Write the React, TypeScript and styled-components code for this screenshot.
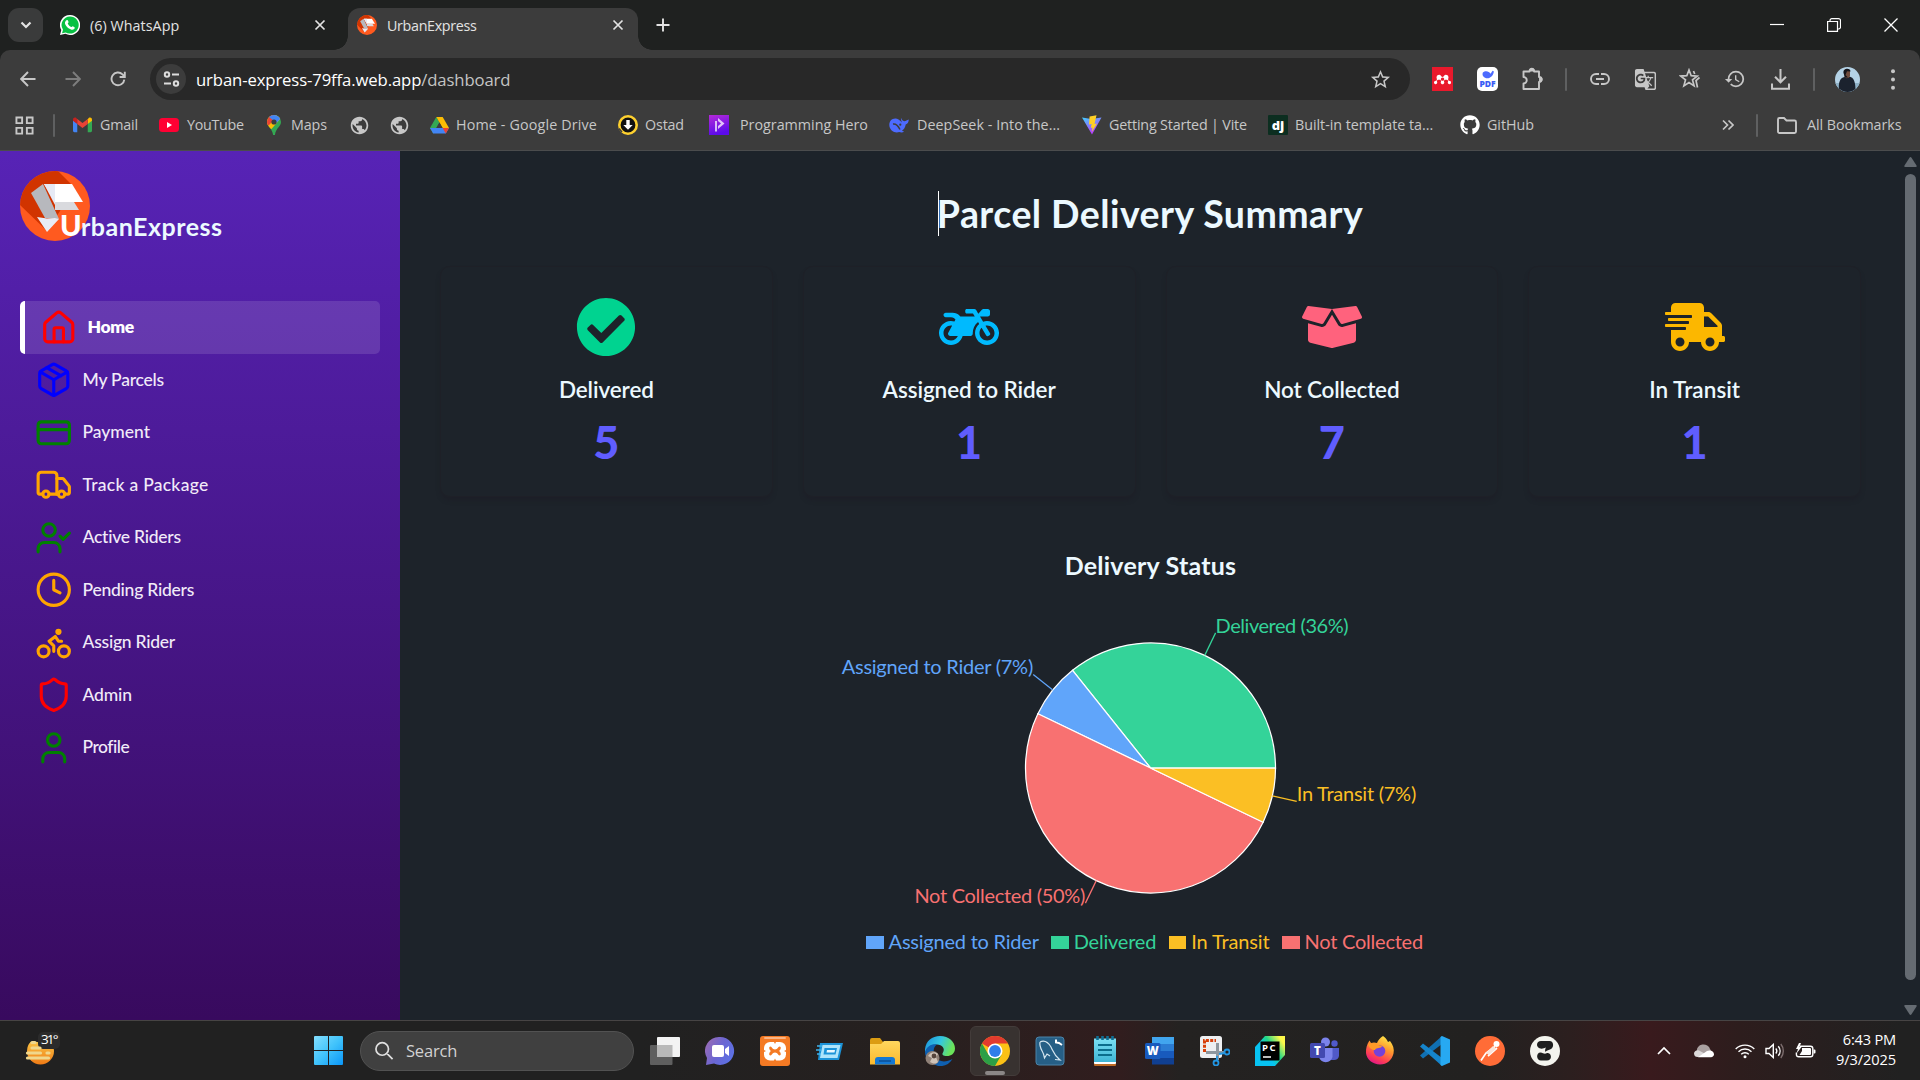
import React from "react";
import styled, { createGlobalStyle, css } from "styled-components";
import { House, Package, CreditCard, Truck, UserCheck, Clock, Bike, Shield, User } from "lucide-react";
import { FaCheckCircle, FaMotorcycle, FaBoxOpen, FaShippingFast, FaGithub } from "react-icons/fa";
import { MdGTranslate, MdHistory, MdStarBorder, MdPublic } from "react-icons/md";
import { SiMendeley } from "react-icons/si";

const UI = `"Open Sans", "Noto Sans", sans-serif`;
const BRAND = `Lato, "Open Sans", sans-serif`;

const Global = createGlobalStyle`
  * { box-sizing: border-box; }
  html, body { margin: 0; background: #1d232a; overflow: hidden; }
  svg { display: block; flex: none; }
`;

const Screen = styled.div`
  width: 1920px;
  height: 1080px;
  display: flex;
  flex-direction: column;
  overflow: hidden;
  font-family: ${UI};
`;

const Label = styled.span<{ $track?: number }>`
  white-space: nowrap;
  letter-spacing: ${(p) => p.$track ?? 0}px;
`;

/* ---------- browser window ---------- */

const TabStrip = styled.div`
  height: 50px;
  flex: none;
  display: flex;
  align-items: flex-end;
  background: #1f2120;
  color: #e3e3e3;
`;

const TabSearch = styled.div`
  width: 35px;
  height: 34px;
  margin: 0 0 8px 8px;
  border-radius: 11px;
  background: #3a3b3b;
  display: flex;
  align-items: center;
  justify-content: center;
`;

const Tab = styled.div<{ $active?: boolean }>`
  position: relative;
  width: ${(p) => (p.$active ? 290 : 305)}px;
  height: 42px;
  padding: 0 ${(p) => (p.$active ? 14 : 22)}px 8px ${(p) => (p.$active ? 9 : 17)}px;
  display: flex;
  align-items: center;
  gap: 10px;
  font-size: 14.3px;
  ${(p) =>
    p.$active &&
    css`
      background: #3c3c3c;
      border-radius: 12px 12px 0 0;
      &::before,
      &::after {
        content: "";
        position: absolute;
        bottom: 0;
        width: 14px;
        height: 14px;
      }
      &::before {
        left: -14px;
        background: radial-gradient(circle at 0 0, transparent 13.5px, #3c3c3c 14px);
      }
      &::after {
        right: -14px;
        background: radial-gradient(circle at 100% 0, transparent 13.5px, #3c3c3c 14px);
      }
    `}
`;

const Grow = styled.div`
  flex: 1;
`;

const NewTab = styled.div`
  width: 50px;
  height: 50px;
  display: flex;
  align-items: center;
  justify-content: center;
`;

const WindowControls = styled.div`
  height: 49px;
  margin-bottom: 1px;
  padding-right: 1px;
  display: grid;
  grid-template-columns: repeat(3, 57px);
  align-items: center;
  justify-items: center;
`;

const Toolbar = styled.div`
  height: 58px;
  flex: none;
  display: flex;
  align-items: center;
  padding-left: 5px;
  background: #3c3c3c;
  color: #c7c7c7;
  border-radius: 10px 10px 0 0;
`;

const ToolbarBack = styled.div`
  background: #1f2120;
`;

const Slot = styled.div<{ $narrow?: boolean }>`
  width: ${(p) => (p.$narrow ? 22.5 : 45)}px;
  flex: none;
  display: flex;
  justify-content: center;
`;

const Divider = styled.div`
  width: 2px;
  height: 23px;
  border-radius: 1px;
  background: #5f6061;
`;

const AddressBar = styled.div`
  width: 1260px;
  height: 42px;
  margin: 0 10px;
  padding: 0 18px 0 6px;
  border-radius: 21px;
  background: #282828;
  display: flex;
  align-items: center;
  gap: 10px;
  font-size: 16.7px;
  color: #fff;
`;

const SiteInfo = styled.div`
  width: 30px;
  height: 30px;
  border-radius: 50%;
  background: #3c3c3c;
  display: flex;
  align-items: center;
  justify-content: center;
`;

const Path = styled.span`
  color: #c4c4c4;
`;

const ExtTile = styled.div<{ $bg: string; $color: string; $r?: number }>`
  width: 21px;
  height: 24px;
  border-radius: ${(p) => p.$r ?? 0}px;
  background: ${(p) => p.$bg};
  color: ${(p) => p.$color};
  display: flex;
  flex-direction: column;
  align-items: center;
  justify-content: center;
  font: 800 8.5px/9px ${UI};
`;

const Bookmarks = styled.div`
  height: 43px;
  flex: none;
  display: flex;
  align-items: center;
  padding: 0 18px 8px 15px;
  background: #3c3c3c;
  border-bottom: 1px solid #4b4c4d;
  color: #c7c7c7;
  font-size: 14.3px;
`;

const Bookmark = styled.div<{ $w: number; $gap?: number }>`
  width: ${(p) => p.$w}px;
  display: flex;
  align-items: center;
  gap: ${(p) => p.$gap ?? 8}px;
  ${Label} {
    padding-bottom: 2px;
  }
`;

/* ---------- dashboard page ---------- */

const Page = styled.div`
  height: 869px;
  flex: none;
  display: flex;
  background: #1d232a;
  font-family: ${BRAND};
  color: #ecf9ff;
`;

const Sidebar = styled.aside`
  width: 400px;
  flex: none;
  padding: 20px;
  background: linear-gradient(to bottom, #5723b6, #380a5e);
`;

const Logo = styled.div`
  height: 70px;
  display: flex;
  align-items: flex-end;
`;

const LogoText = styled.div`
  margin: 0 0 -3px -30px;
  font-weight: 700;
  font-size: 25px;
  line-height: 36px;
  letter-spacing: 0.5px;
`;

const LogoInitial = styled.span`
  font-size: 29px;
  color: #fff;
  font-weight: 900;
  letter-spacing: -0.6px;
`;

const Nav = styled.nav`
  margin-top: 60px;
  display: flex;
  flex-direction: column;
`;

const NavItem = styled.div<{ $active?: boolean; $color: string }>`
  height: 52.5px;
  padding-left: 15px;
  display: flex;
  align-items: center;
  gap: 10px;
  font-size: 17.5px;
  font-weight: 500;
  color: #f1ebf8;
  svg {
    color: ${(p) => p.$color};
  }
  ${Label} {
    padding-bottom: 1px;
  }
  ${(p) =>
    p.$active &&
    css`
      border-left: 5px solid #fff;
      border-radius: 5px;
      background: rgba(255, 255, 255, 0.12);
      color: #fff;
      font-weight: 800;
    `}
`;

const Main = styled.main`
  flex: 1;
  padding: 40px;
  display: flex;
  flex-direction: column;
  align-items: center;
`;

const Heading = styled.h1`
  margin: 0 0 30px;
  border-left: 1px solid #fff;
  text-indent: -2px;
  font-size: 37.5px;
  line-height: 45px;
  font-weight: 700;
  letter-spacing: 0.42px;
`;

const Cards = styled.div`
  width: 100%;
  display: grid;
  grid-template-columns: repeat(4, 1fr);
  gap: 30px;
`;

const Card = styled.section<{ $icon: string }>`
  height: 231px;
  padding-top: 30px;
  border: 1px solid #1e2027;
  border-radius: 10px;
  box-shadow: 0 4px 5px -1px rgba(30, 24, 34, 0.35);
  display: flex;
  flex-direction: column;
  align-items: center;
  svg {
    color: ${(p) => p.$icon};
    width: 60px;
    height: 60px;
  }
`;

const CardTitle = styled.h2<{ $track: number }>`
  margin: 15px 0 10px;
  font-size: 22.5px;
  line-height: 35px;
  font-weight: 600;
  letter-spacing: ${(p) => p.$track}px;
`;

const CardValue = styled.p`
  margin: 0;
  font-size: 45px;
  line-height: 50px;
  font-weight: 900;
  color: #605dff;
`;

const ChartTitle = styled.h3`
  margin: 51px 0 17px;
  font-size: 25px;
  line-height: 35px;
  font-weight: 700;
  letter-spacing: 0.22px;
`;

const Chart = styled.svg`
  overflow: visible;
  font: 400 20px ${BRAND};
`;

const Legend = styled.div`
  height: 30px;
  margin-top: 6px;
  padding-right: 12px;
  display: flex;
  align-items: center;
  gap: 12.5px;
`;

const LegendItem = styled.div<{ $color: string; $track: number }>`
  display: flex;
  align-items: center;
  gap: 5px;
  font-size: 20px;
  line-height: 30px;
  color: ${(p) => p.$color};
  letter-spacing: ${(p) => p.$track}px;
  white-space: nowrap;
  &::before {
    content: "";
    width: 17.5px;
    height: 13.5px;
    margin-top: 3px;
    background: ${(p) => p.$color};
  }
`;

const Scrollbar = styled.div`
  width: 19px;
  flex: none;
  padding: 6px 4px 5px 4px;
  display: flex;
  flex-direction: column;
  align-items: center;
  color: #656b72;
`;

const Thumb = styled.div`
  width: 11px;
  height: 806px;
  margin: 7px 0 25px;
  border-radius: 6px;
  background: #656b72;
`;

/* ---------- taskbar ---------- */

const Taskbar = styled.footer`
  height: 60px;
  flex: none;
  display: flex;
  align-items: center;
  border-top: 1px solid #474444;
  background: linear-gradient(
    90deg,
    #212121 0,
    #212121 640px,
    #26201f 900px,
    #311d1e 1120px,
    #242221 1180px,
    #222120 1480px,
    #2c1f1f 1570px,
    #391a1d 1650px,
    #2d1d1d 1740px,
    #212121 1900px
  );
  color: #fff;
`;

const Weather = styled.div`
  width: 314px;
  padding-left: 25px;
`;

const SearchBox = styled.div`
  width: 274px;
  height: 40px;
  margin: 0 3px 0 17px;
  padding-left: 14px;
  border-radius: 20px;
  border: 1px solid #525252;
  background: #404040;
  display: flex;
  align-items: center;
  gap: 12px;
  font-size: 16.5px;
  letter-spacing: -0.2px;
  color: #d2d2d2;
`;

const AppButton = styled.div<{ $active?: boolean }>`
  position: relative;
  width: 50px;
  height: 50px;
  margin: 0 2.5px;
  border-radius: 6px;
  display: flex;
  align-items: center;
  justify-content: center;
  ${(p) =>
    p.$active &&
    css`
      background: #383230;
      border: 1px solid #433c3a;
      &::after {
        content: "";
        position: absolute;
        bottom: 0;
        left: 14px;
        width: 20px;
        height: 4px;
        border-radius: 2px;
        background: #8b8786;
      }
    `}
`;

const Tray = styled.div`
  display: flex;
  align-items: center;
  gap: 20px;
`;

const TrayGroup = styled.div`
  margin-left: -2px;
  display: flex;
  gap: 10px;
`;

const Clockface = styled.div`
  width: 60px;
  margin-right: 24px;
  padding-bottom: 3px;
  display: flex;
  flex-direction: column;
  align-items: flex-end;
  font-size: 14.6px;
  line-height: 20px;
`;

/* ---------- drawings ---------- */

type StrokeProps = { size?: number; d: string; w?: number; color?: string; box?: string };
const Stroke = ({ size = 20, d, w = 2, color = "currentColor", box = "0 0 20 20" }: StrokeProps) => (
  <svg width={size} height={size} viewBox={box} fill="none" stroke={color} strokeWidth={w}>
    <path d={d} />
  </svg>
);

const BrandMark = ({ size }: { size: number }) => (
  <svg width={size} height={size} viewBox="0 0 70 70">
    <defs>
      <clipPath id={`mark${size}`}><circle cx="35" cy="35" r="35" /></clipPath>
    </defs>
    <g clipPath={`url(#mark${size})`}>
      <rect width="70" height="70" fill="#ff5a1f" />
      <path d="M0 0H38L52 14 40 40 27 60 0 34Z" fill="#d13400" />
      <path d="M35 31H54L59 39H35Z" fill="#d9dade" />
      <path d="M24 13H52L63 31H35Z" fill="#fff" />
      <path d="M24 13H35V34Z" fill="#e6eaf5" />
      <path d="M11 22 23 13 39 48 25 47Z" fill="#b7b8bd" />
      <path d="M17 46 27 47.5 35 47 39 48 27 61Z" fill="#e8ecf6" />
    </g>
  </svg>
);

const WhatsApp = () => (
  <svg width="20" height="20" viewBox="0 0 20 20">
    <path d="M10 0a10 10 0 1 1-4.600 18.800L0 20l1.300-5A10 10 0 0 1 10 0Z" fill="#fff" />
    <path d="M10 1.400a8.600 8.600 0 1 1-4.300 16L2 18.200l1-3.500A8.600 8.600 0 0 1 10 1.400Z" fill="#08c143" />
    <path d="M6.500 5.300c.7-.6 1.200-.3 1.400.2l.7 1.600c.1.500-.9 1.200-.8 1.600.8 1.600 1.900 2.600 3.500 3.400.4.100 1-1 1.500-.8l1.700.9c.4.300.2 1.300-.4 1.900-1.300 1.300-3.500.6-5.600-.8-1.700-1.200-3.100-3-3.500-4.800-.2-1.300.5-2.500 1.500-3.200Z" fill="#fff" />
  </svg>
);

const Gmail = () => (
  <svg width="19" height="20" viewBox="0 0 20 16">
    <path d="M0 3v11a1.500 1.500 0 0 0 1.400 1.500H4.500V6.500Z" fill="#4285f4" />
    <path d="M20 3v11a1.500 1.500 0 0 1-1.400 1.500H15.500V6.500Z" fill="#34a853" />
    <path d="M15.500 2v5L20 3.500V2.300C20 .3 18-.5 16.500.6Z" fill="#fbbc04" />
    <path d="M4.500 2v5L0 3.500V2.300C0 .3 2-.5 3.500.6Z" fill="#c5221f" />
    <path d="M4.500 1.800 10 6l5.500-4.200V7L10 11.200 4.500 7Z" fill="#ea4335" />
  </svg>
);

const YouTube = () => (
  <svg width="20" height="14" viewBox="0 0 20 14">
    <rect width="20" height="14" rx="3.500" fill="#ff0033" />
    <path d="M8 4v6l5-3Z" fill="#fff" />
  </svg>
);

const MapsPin = () => (
  <svg width="14" height="20" viewBox="0 0 14 20">
    <defs>
      <clipPath id="pin"><path d="M7 0a7 7 0 0 1 7 7c0 4.500-5 6-6 12.400a1 1 0 0 1-2 0C5 13 0 11.500 0 7a7 7 0 0 1 7-7Z" /></clipPath>
    </defs>
    <g clipPath="url(#pin)">
      <rect width="14" height="20" fill="#34a853" />
      <path d="M0 0H14V3L4.500 14 0 13Z" fill="#fbbc04" />
      <path d="M0 0H6L7 5 1.500 10.500 0 11Z" fill="#ea4335" />
      <path d="M3-1H14V3L9.500 8 2 2Z" fill="#4285f4" />
    </g>
    <circle cx="7" cy="7" r="2.600" fill="#3c3c3c" />
  </svg>
);

const Drive = () => (
  <svg width="19" height="17" viewBox="0 0 19 17">
    <path d="M6.300 0 0 11l3.200 5.500L9.500 5.600Z" fill="#34a853" />
    <path d="M6.300 0h6.400L19 11h-6.400Z" fill="#fbbc04" />
    <path d="M0 11H19l-3.200 5.500H3.200Z" fill="#4285f4" />
    <path d="M12.600 11H19l-3.200 5.500Z" fill="#ea4335" />
    <path d="M6.300 11h6.300L9.500 5.600Z" fill="#3c3c3c" />
  </svg>
);

const Ostad = () => (
  <svg width="20" height="20" viewBox="0 0 20 20">
    <circle cx="10" cy="10" r="8.700" fill="#111" stroke="#fdd02f" strokeWidth="2.600" />
    <path d="M1 13.500 4 17" stroke="#3c3c3c" strokeWidth="1.500" />
    <path d="M8.300 5h3.400v5h3L10 14.800 5.300 10h3Z" fill="#fff" />
  </svg>
);

const ProgHero = () => (
  <svg width="20" height="20" viewBox="0 0 20 20">
    <defs><linearGradient id="ph" x2="0.300" y2="1"><stop stopColor="#b52ad8" /><stop offset="1" stopColor="#5b0bea" /></linearGradient></defs>
    <rect width="20" height="20" fill="url(#ph)" />
    <path d="M7 6v10.500" stroke="#fff" strokeWidth="1.400" />
    <path d="M9 3l6.500 5.500L9 14V11l3-2.500L9 6Z" fill="#e2c2fa" />
  </svg>
);

const Whale = () => (
  <svg width="20" height="20" viewBox="0 0 20 20">
    <path d="M12.500 3c.3 1.800 1.200 3 2.700 3.200C17 6 18 5 19.800 4.500c-.2 2.500-1 4.300-3.100 5-.5 3-1.700 4.800-3.700 6.200l2.200 1.100c-1.600.9-3.300.9-5 .3C5.500 18.500.5 15.500.3 10 .2 6 3 3.200 6.500 3.400c2 .1 4 1.500 6.500 4-.8-1.500-1.200-3-.5-4.400Z" fill="#4d6bfe" />
    <path d="M4 9c3-.5 5.500 2.500 7 5.500" stroke="#3c3c3c" strokeWidth="1.500" fill="none" />
    <circle cx="11.300" cy="9.700" r="1.100" fill="#3c3c3c" />
  </svg>
);

const Vite = () => (
  <svg width="20" height="20" viewBox="0 0 20 20">
    <defs><linearGradient id="vt" x2="0.500" y2="1"><stop stopColor="#41d1ff" /><stop offset="1" stopColor="#bd34fe" /></linearGradient></defs>
    <path d="M0 2.500 9.300 4 19.500 2.500 10 19.500Z" fill="url(#vt)" />
    <path d="M14.500.2 7.600 1.500 7 9.500l2.600-.5-.8 4 1.700-.5-.7 4.500L15 8.500l-2.500.4Z" fill="#ffcf26" />
  </svg>
);

const Django = () => (
  <svg width="20" height="20" viewBox="0 0 20 20">
    <rect width="20" height="20" rx="1" fill="#0c2e20" />
    <text x="10" y="14.500" textAnchor="middle" fontFamily={UI} fontSize="13" fontWeight="800" fill="#fff">dj</text>
  </svg>
);

const Puzzle = () => (
  <svg width="21" height="24" viewBox="0 0 21 24" fill="none" stroke="currentColor" strokeWidth="1.900" strokeLinejoin="round">
    <path d="M1.500 4.500H7.500a2.300 2.300 0 0 1 4.600 0H17V10a2.400 2.400 0 0 1 0 5V22H1.500V16.500a3 3 0 0 0 0-6.500Z" />
    <path d="M8 3.500a1.800 1.800 0 0 1 3.600 0ZM18 10.800a1.700 1.700 0 0 1 0 3.400Z" fill="currentColor" />
  </svg>
);

const Avatar = () => (
  <svg width="25" height="25" viewBox="0 0 25 25">
    <defs><clipPath id="av"><circle cx="12.500" cy="12.500" r="12.500" /></clipPath></defs>
    <g clipPath="url(#av)">
      <rect width="25" height="25" fill="#b4d2e6" />
      <rect y="16" width="25" height="9" fill="#8db0c6" />
      <path d="M4 25C3 15 5 11 9.500 10l4.500-.5c5 1 6.500 5 6.500 15.500Z" fill="#1b222e" />
      <path d="M9 3.500C10 1.500 14.500 1.500 15 4v5c-1 2.500-4 3-5.500 1Z" fill="#6f4b3d" />
      <path d="M8.500 6C7.500 1 15.500 0 15.500 4.500L12 4.300 10.500 8 13 10.500h-3Z" fill="#14151b" />
    </g>
  </svg>
);

const Sun = () => (
  <svg width="36" height="36" viewBox="0 0 36 36" overflow="visible">
    <defs><linearGradient id="sun" x2="0" y2="1"><stop stopColor="#fbd04c" /><stop offset="1" stopColor="#f07b16" /></linearGradient></defs>
    <circle cx="15.500" cy="18" r="13.500" fill="url(#sun)" />
    <rect x="13" y="-1" width="22" height="17" rx="5" fill="#2b2b2b" />
    <rect x="0" y="0" width="13" height="9" fill="#212121" />
    <g stroke="#f0d78c" strokeWidth="3.200" strokeLinecap="round">
      <path d="M7 9.500h3M7 15h8M2.500 20h13M22 20h2M2.500 25h21" />
    </g>
    <text x="16" y="11" fontFamily={UI} fontSize="13.500" fill="#fff" textLength="17.500">31°</text>
  </svg>
);

const Windows = () => (
  <svg width="29" height="29" viewBox="0 0 29 29">
    <defs><linearGradient id="win" gradientUnits="userSpaceOnUse" x1="0" y1="0" x2="29" y2="29"><stop stopColor="#84dfff" /><stop offset="0.500" stopColor="#41c3fb" /><stop offset="1" stopColor="#0a96f8" /></linearGradient></defs>
    <path d="M0 1a1 1 0 0 1 1-1H14V14H0ZM15 0H28a1 1 0 0 1 1 1V14H15ZM0 15H14V29H1a1 1 0 0 1-1-1ZM15 15H29V28a1 1 0 0 1-1 1H15Z" fill="url(#win)" />
  </svg>
);

const Icon30 = ({ children }: { children: React.ReactNode }) => (
  <svg width="30" height="30" viewBox="0 0 30 30">{children}</svg>
);

const TaskView = () => (
  <Icon30>
    <rect x="0" y="9" width="22.500" height="20" rx="1" fill="#5f5f5f" />
    <rect x="7" y="1" width="23" height="20" rx="1" fill="#f3f3f3" />
    <rect x="7" y="9" width="15.500" height="12" fill="#b9b9b9" />
  </Icon30>
);
const Chat = () => (
  <Icon30>
    <defs><linearGradient id="chat" x1="0" y1="0.200" x2="1" y2="0.700"><stop stopColor="#9a6bb4" /><stop offset="0.500" stopColor="#6b66d2" /><stop offset="1" stopColor="#5b72e6" /></linearGradient></defs>
    <path d="M15 1a14 14 0 1 1-6 26.600L1 29l1-7A14 14 0 0 1 15 1Z" fill="url(#chat)" />
    <rect x="7" y="9" width="12" height="12" rx="2" fill="#fff" />
    <path d="M20 13l4-3v10l-4-3Z" fill="#fff" />
  </Icon30>
);
const Xampp = () => (
  <Icon30>
    <rect width="30" height="30" rx="3" fill="#f47a24" />
    <rect x="4" y="1" width="22" height="2" rx="1" fill="#f9b586" />
    <rect x="4" y="6" width="22" height="18.500" rx="6" fill="#fff" />
    <path d="M10.500 10.500c1.500 0 1.500 3 4.500 3s3-3 4.500-3c2 0 1.500 3-.5 4.500 2 1.500 2.500 4.500.5 4.500-1.500 0-1.500-3-4.500-3s-3 3-4.500 3c-2 0-1.500-3 .5-4.500-2-1.500-2.500-4.500-.5-4.500Z" fill="#f47a24" />
    <path d="M3 13.500l3 1.500-3 1.500ZM27 13.500 24 15l3 1.500ZM13.500 5l1.500 3 1.500-3ZM13.500 25.500l1.500-3 1.500 3Z" fill="#f47a24" />
  </Icon30>
);
const RunBox = () => (
  <Icon30>
    <path d="M5 7H28L24 24H3Z" fill="#1b93d8" />
    <path d="M2 10h5M1 14h5M2 18h4" stroke="#3db2ec" strokeWidth="1.500" />
    <path d="M7.500 9H25.500L22.500 22H5Z" fill="#aee4fb" />
    <path d="M9.500 12H22L20.500 18.500H8.500Z" fill="#1b93d8" />
    <path d="M12 14h8l-.5 2.500h-8Z" fill="#e8f8ff" />
  </Icon30>
);
const Explorer = () => (
  <Icon30>
    <defs><linearGradient id="fold" x2="0" y2="1"><stop stopColor="#ffd75e" /><stop offset="1" stopColor="#fbb92e" /></linearGradient></defs>
    <path d="M0 4a2 2 0 0 1 2-2h8l3 4H28v6H0Z" fill="#dc9c12" />
    <path d="M0 8H11l3-3H28a2 2 0 0 1 2 2V28.500H0Z" fill="url(#fold)" />
    <path d="M5 28.500V24a3 3 0 0 1 3-3H22a3 3 0 0 1 3 3v4.500Z" fill="#1478d4" />
    <path d="M9 25H21" stroke="#0b4f96" strokeWidth="1.500" />
  </Icon30>
);
const Edge = () => (
  <Icon30>
    <defs><linearGradient id="edge" x2="1" y2="0.300"><stop stopColor="#1a8fdd" /><stop offset="0.550" stopColor="#34c6e0" /><stop offset="1" stopColor="#6be35a" /></linearGradient></defs>
    <path d="M0 13C1 5 7 0 15 0c9 0 15 6 15 12.500 0 5-4 7.500-8 7.500-4 0-5.500-1.500-4-3.500 2.500-4-1-8-6-8C6 8.500 2 12 0 17Z" fill="url(#edge)" />
    <path d="M0 16C2 10 7 7.500 12 8.500 8 11 8 16 10 20c3 6 10 7 17.500 3C24 29 18 31 12.500 29.700 5 28 0 22 0 16Z" fill="#0f5fb0" />
    <circle cx="7.500" cy="22" r="7" fill="#8f8077" />
    <path d="M3 20c2-4 7-5 10-2l-2 3 2 5c-3 3-6 1-8 0l2-4Z" fill="#cfc3b9" />
    <circle cx="9" cy="20" r="2.400" fill="#55443c" />
  </Icon30>
);
const Chrome = () => (
  <Icon30>
    <circle cx="15" cy="15" r="15" fill="#fbc116" />
    <path d="M15 15 2 7.500A15 15 0 0 1 28 7.500H15Z" fill="#e33b2e" />
    <path d="M2 7.500A15 15 0 0 0 15 30l6.500-11.200L15 15 8.500 18.800Z" fill="#2c9f46" />
    <circle cx="15" cy="15" r="7.500" fill="#fff" />
    <circle cx="15" cy="15" r="5.900" fill="#2f7de9" />
  </Icon30>
);
const Workbench = () => (
  <Icon30>
    <rect x="1" y="1" width="28" height="28" rx="3" fill="#265f86" stroke="#4a83a8" />
    <path d="M5 6c4-2 8 0 11 5 2 4 3 8 9 13l-5-.5M5 6c-1 5 2 8 3.500 12l1 4 2.500-4 3 2" fill="none" stroke="#d5e6f0" strokeWidth="1.200" />
    <path d="M21 3.500v3l3 .5 3 2" stroke="#fff" strokeWidth="2" fill="none" />
  </Icon30>
);
const Notepad = () => (
  <Icon30>
    <defs><linearGradient id="np" x2="0" y2="1"><stop stopColor="#7be0f3" /><stop offset="1" stopColor="#3fb6d6" /></linearGradient></defs>
    <rect x="4" y="26" width="22" height="4" rx="1" fill="#bd6a25" />
    <rect x="4" y="3" width="22" height="25" rx="1" fill="#fff" />
    <rect x="4" y="2.500" width="22" height="23.500" fill="url(#np)" />
    <path d="M8 9H22M8 14H22M8 19H22" stroke="#0b6e8c" strokeWidth="2" />
    <path d="M7.500 0V4M12.500 0V4M17.500 0V4M22.500 0V4" stroke="#0f6f94" strokeWidth="2.600" />
  </Icon30>
);
const Word = () => (
  <Icon30>
    <rect x="7" y="1" width="22" height="7" fill="#41a5ee" />
    <rect x="7" y="8" width="22" height="7" fill="#2b7cd3" />
    <rect x="7" y="15" width="22" height="7" fill="#185abd" />
    <rect x="7" y="22" width="22" height="6.500" fill="#103f91" />
    <rect x="0" y="7" width="15.500" height="16" rx="1.500" fill="#185abd" />
    <text x="7.700" y="19" textAnchor="middle" fontFamily={UI} fontSize="11.500" fontWeight="800" fill="#fff">W</text>
  </Icon30>
);
const Snip = () => (
  <Icon30>
    <rect x="0" y="0" width="22" height="22" rx="2.500" fill="#eeeff1" />
    <path d="M4.500 16V4.500H16" stroke="#d8410c" strokeWidth="3" strokeDasharray="3 1.300" fill="none" />
    <path d="M6 16.500H24M17.500 7V24" stroke="#8f979e" strokeWidth="3" />
    <circle cx="27" cy="16" r="2.500" fill="none" stroke="#2296e3" strokeWidth="1.800" />
    <circle cx="16" cy="27" r="2.500" fill="none" stroke="#2296e3" strokeWidth="1.800" />
    <path d="M19 18l6-1M17 25v-5" stroke="#2296e3" strokeWidth="1.800" />
  </Icon30>
);
const PyCharm = () => (
  <Icon30>
    <defs><linearGradient id="py" x1="0" y1="0.800" x2="1" y2="0.100"><stop offset="0.350" stopColor="#07c3f2" /><stop offset="0.600" stopColor="#21d789" /><stop offset="0.900" stopColor="#fcf84a" /></linearGradient></defs>
    <path d="M0 11 10 0H30V19L20 30H0Z" fill="url(#py)" />
    <rect x="5.500" y="5.500" width="19" height="19" fill="#000" />
    <text x="7" y="15" fontFamily={UI} fontSize="9.500" fontWeight="700" fill="#fff" textLength="13.500">PC</text>
    <path d="M8 21h8" stroke="#fff" strokeWidth="1.500" />
  </Icon30>
);
const Teams = () => (
  <Icon30>
    <circle cx="24.500" cy="7.500" r="3.200" fill="#5059c9" />
    <circle cx="15.500" cy="6" r="4.500" fill="#7b83eb" />
    <path d="M19 12h10v8a5 5 0 0 1-5 4h-5Z" fill="#5059c9" />
    <path d="M9 12H22.500V21a7 7 0 0 1-13.500 0Z" fill="#7b83eb" />
    <rect x="0" y="7" width="15" height="15" rx="1.500" fill="#4249b0" />
    <text x="7.500" y="18.500" textAnchor="middle" fontFamily={UI} fontSize="11.500" fontWeight="800" fill="#fff">T</text>
  </Icon30>
);
const Firefox = () => (
  <Icon30>
    <defs><linearGradient id="ff" x1="0.800" y1="0" x2="0.300" y2="1"><stop stopColor="#fff04a" /><stop offset="0.400" stopColor="#ff9a2e" /><stop offset="0.750" stopColor="#ff4052" /><stop offset="1" stopColor="#e0158a" /></linearGradient></defs>
    <path d="M18 0c3 2 4 4 5 6l2-1c3 4 4.500 8 3.500 12.500C27 24 22 28.500 15 28.500S1.500 23.500 1 17C.8 12 2 8 4.500 4.500L6 7c2-.8 4-.8 6 0 1-3 3-5 6-7Z" fill="url(#ff)" />
    <circle cx="14.500" cy="15" r="5.800" fill="#7542d8" />
    <path d="M3 8c4-1 8-1 10 1l4 1c-1 3-6 1-7 4-3 0-6-2-7-6Z" fill="#ff9b27" />
  </Icon30>
);
const VsCode = () => (
  <Icon30>
    <path d="M22 0 22 8 3 22.500 0 19.500Z" fill="#1070b3" />
    <path d="M22 30V22L3 7.500 0 10.500Z" fill="#1584cb" />
    <path d="M22 0 30 3.500V26.500L22 30 20.500 29V1Z" fill="#27a9f2" />
  </Icon30>
);
const Postman = () => (
  <Icon30>
    <circle cx="15" cy="15" r="15" fill="#ff6c37" />
    <circle cx="21.500" cy="8" r="3" fill="#fff" />
    <path d="M20 10.500 11 17l-5 7.500M22 12l-9 8" stroke="#fff" strokeWidth="1.700" fill="none" />
    <path d="M18 10l3 3-7 6-3-2Z" fill="#fbe3d8" />
  </Icon30>
);
const RoundApp = () => (
  <Icon30>
    <circle cx="15" cy="15" r="15" fill="#f4f4ee" />
    <path d="M11 5h8.500c4.500 0 5 7 .5 8.500-2 .7-3.500 1-4.500 2.500-1-2 0-3.500.5-4.500-2 1-4.500 1.500-6.500.8C6 11 6 5 11 5Z" fill="#1f1f1f" />
    <path d="M10.500 16.500c2 0 3 1.300 4.500 1.300s2-1 3.500-.6c3.500.8 3.500 7.300-1.500 7.300H11c-5 0-5-8-.5-8Z" fill="#1f1f1f" />
  </Icon30>
);

const SettingsDots = () => (
  <svg width="17" height="16" viewBox="0 0 17 16" fill="none" stroke="#dcdcdc" strokeWidth="2">
    <circle cx="4" cy="3.500" r="2.200" /><path d="M9 3.500h7M1 12.500h7" /><circle cx="13" cy="12.500" r="2.200" />
  </svg>
);

/* ---------- data ---------- */

const bookmarks = [
  { w: 86, icon: <Gmail />, text: "Gmail", track: -0.2 },
  { w: 108, icon: <YouTube />, text: "YouTube", track: -0.3 },
  { w: 82, icon: <MapsPin />, text: "Maps", track: -0.1, gap: 10 },
  { w: 40, icon: <MdPublic size={21} /> },
  { w: 41, icon: <MdPublic size={21} /> },
  { w: 188, icon: <Drive />, text: "Home - Google Drive", track: 0.15, gap: 7 },
  { w: 91, icon: <Ostad />, text: "Ostad", track: -0.15, gap: 7 },
  { w: 180, icon: <ProgHero />, text: "Programming Hero", track: 0, gap: 11 },
  { w: 193, icon: <Whale />, text: "DeepSeek - Into the...", track: 0.05 },
  { w: 186, icon: <Vite />, text: "Getting Started | Vite", track: -0.17, gap: 7 },
  { w: 192, icon: <Django />, text: "Built-in template ta...", track: -0.03, gap: 7 },
  { w: 90, icon: <FaGithub size={20} color="#fff" />, text: "GitHub", track: -0.02, gap: 7 },
];

const navItems = [
  { Icon: House, text: "Home", color: "red", track: -0.4, active: true },
  { Icon: Package, text: "My Parcels", color: "blue", track: -0.21 },
  { Icon: CreditCard, text: "Payment", color: "green", track: -0.02 },
  { Icon: Truck, text: "Track a Package", color: "orange", track: 0.27 },
  { Icon: UserCheck, text: "Active Riders", color: "green", track: -0.24 },
  { Icon: Clock, text: "Pending Riders", color: "orange", track: -0.24 },
  { Icon: Bike, text: "Assign Rider", color: "orange", track: -0.25 },
  { Icon: Shield, text: "Admin", color: "red", track: -0.15 },
  { Icon: User, text: "Profile", color: "green", track: -0.5 },
];

const cards = [
  { Icon: FaCheckCircle, title: "Delivered", value: 5, color: "#00d390", track: -0.1 },
  { Icon: FaMotorcycle, title: "Assigned to Rider", value: 1, color: "#00bafe", track: -0.09 },
  { Icon: FaBoxOpen, title: "Not Collected", value: 7, color: "#ff627d", track: -0.18 },
  { Icon: FaShippingFast, title: "In Transit", value: 1, color: "#fcb700", track: 0.04 },
];

const slices = [
  { name: "Delivered", count: 5, color: "#34d399", width: 133 },
  { name: "Assigned to Rider", count: 1, color: "#60a5fa", width: 191.5 },
  { name: "Not Collected", count: 7, color: "#f87171", width: 171 },
  { name: "In Transit", count: 1, color: "#fbbf24", width: 119.5 },
];

const legend = [
  { name: "Assigned to Rider", color: "#60a5fa", track: -0.22 },
  { name: "Delivered", color: "#34d399", track: -0.22 },
  { name: "In Transit", color: "#fbbf24", track: -0.12 },
  { name: "Not Collected", color: "#f87171", track: -0.23 },
];

const apps = [TaskView, Chat, Xampp, RunBox, Explorer, Edge, Chrome, Workbench, Notepad, Word, Snip, PyCharm, Teams, Firefox, VsCode, Postman, RoundApp];

const CX = 349.5;
const CY = 168;
const R = 125;
const point = (deg: number, r: number) => {
  const a = (deg * Math.PI) / 180;
  return [CX + r * Math.cos(a), CY - r * Math.sin(a)];
};

const StatusPie = () => {
  const total = slices.reduce((n, s) => n + s.count, 0);
  let angle = 0;
  return (
    <Chart width="700" height="320" viewBox="0 0 700 320">
      {slices.map((s) => {
        const start = angle;
        angle += (s.count / total) * 360;
        const mid = (start + angle) / 2;
        const [x1, y1] = point(start, R);
        const [x2, y2] = point(angle, R);
        const [lx, ly] = point(mid, R);
        const [tx, ty] = point(mid, 150);
        return (
          <g key={s.name}>
            <path d={`M${CX} ${CY}L${x1} ${y1}A${R} ${R} 0 0 0 ${x2} ${y2}Z`} fill={s.color} stroke="#fff" strokeWidth="1.25" />
            <path d={`M${lx} ${ly}L${tx} ${ty}`} stroke={s.color} strokeWidth="1.25" />
            <text x={tx} y={ty} fill={s.color} textAnchor={tx > CX ? "start" : "end"} textLength={s.width}>
              {`${s.name} (${Math.round((s.count / total) * 100)}%)`}
            </text>
          </g>
        );
      })}
    </Chart>
  );
};

export default function App() {
  return (
    <Screen>
      <Global />
      <TabStrip>
        <TabSearch><Stroke size={12} box="0 0 12 12" d="M1.500 3.500 6 8l4.500-4.500" w={2.2} color="#e3e3e3" /></TabSearch>
        <Tab>
          <WhatsApp />
          <Label $track={0.05}>(6) WhatsApp</Label>
          <Grow />
          <Stroke size={12} box="0 0 12 12" d="M1.500 1.500l9 9M10.500 1.500l-9 9" w={1.7} />
        </Tab>
        <Tab $active>
          <BrandMark size={20} />
          <Label $track={-0.33}>UrbanExpress</Label>
          <Grow />
          <Stroke size={12} box="0 0 12 12" d="M1.500 1.500l9 9M10.500 1.500l-9 9" w={1.7} />
        </Tab>
        <NewTab><Stroke size={14} box="0 0 14 14" d="M7 .5v13M.5 7h13" w={1.9} /></NewTab>
        <Grow />
        <WindowControls>
          <Stroke size={14} box="0 0 14 14" d="M0 6.500h14" w={1.2} color="#fff" />
          <Stroke size={14} box="0 0 14 14" d="M.600 3.500h9.900v9.900H.600ZM3 3.500V2.500A1.900 1.900 0 0 1 5 .6h6.500a2 2 0 0 1 2 2V9a1.900 1.900 0 0 1-2 2h-1" w={1.2} color="#fff" />
          <Stroke size={14} box="0 0 14 14" d="M.500.500l13 13M13.500.500l-13 13" w={1.3} color="#fff" />
        </WindowControls>
      </TabStrip>
      <ToolbarBack>
        <Toolbar>
          <Slot><Stroke size={16} box="0 0 16 16" d="M15.500 8H1.500M8 1 1.200 8 8 15" w={1.9} /></Slot>
          <Slot><Stroke size={16} box="0 0 16 16" d="M.5 8h14M8 1l6.800 7L8 15" w={1.9} color="#7d7d7d" /></Slot>
          <Slot><Stroke size={16} box="0 0 16 16" d="M14.300 8.600A6.400 6.400 0 1 1 12.500 3.400L14.500 5.500M14.800 .8v5.200H9.600" w={1.9} /></Slot>
          <AddressBar>
            <SiteInfo><SettingsDots /></SiteInfo>
            <Label $track={-0.12}>urban-express-79ffa.web.app<Path>/dashboard</Path></Label>
            <Grow />
            <MdStarBorder size={23} color="#c7c7c7" />
          </AddressBar>
          <Slot><ExtTile $bg="#e9192c" $color="#fff"><SiMendeley size={17} /></ExtTile></Slot>
          <Slot><ExtTile $bg="#fff" $color="#3a5cf5" $r={5}><svg width="14" height="9" viewBox="0 0 20 14"><path d="M2 4c4-4 10-2 12 2l3-5 2 1c0 6-5 11-10 11S0 9 2 4Z" fill="#4d6bfe" /></svg>PDF</ExtTile></Slot>
          <Slot><Puzzle /></Slot>
          <Slot $narrow><Divider /></Slot>
          <Slot>
            <svg width="20" height="12" viewBox="0 0 20 12" fill="none" stroke="currentColor" strokeWidth="1.900">
              <path d="M9 1H6a5 5 0 0 0 0 10h3M11 1h3a5 5 0 0 1 0 10h-3M6 6h8" />
            </svg>
          </Slot>
          <Slot><MdGTranslate size={23} /></Slot>
          <Slot>
            <svg width="22" height="22" viewBox="0 0 22 22" fill="none" stroke="currentColor" strokeWidth="1.700">
              <path d="M10 2l2.200 5.700 6 .4-4.700 3.800 1.600 6L10 14.600 4.900 17.900l1.600-6L1.800 8.100l6-.4ZM14.500 3l1.200 3M20.500 9.500l-3.500 3 1.500 7" />
            </svg>
          </Slot>
          <Slot><MdHistory size={22} /></Slot>
          <Slot><Stroke size={21} box="0 0 21 23" d="M10.500 0v14M4.500 8.500l6 6 6-6M1.200 16v5.500H19.800V16" w={2.200} /></Slot>
          <Slot $narrow><Divider /></Slot>
          <Slot><Avatar /></Slot>
          <Slot>
            <svg width="4" height="21" viewBox="0 0 4 21" fill="currentColor"><circle cx="2" cy="2.200" r="2" /><circle cx="2" cy="10.500" r="2" /><circle cx="2" cy="18.800" r="2" /></svg>
          </Slot>
        </Toolbar>
      </ToolbarBack>
      <Bookmarks>
        <Bookmark $w={38}><Stroke size={19} d="M1.500 1.500h6v6h-6ZM12.500 1.500h6v6h-6ZM1.500 12.500h6v6h-6ZM12.500 12.500h6v6h-6Z" w={2} /></Bookmark>
        <Bookmark $w={20}><Divider /></Bookmark>
        {bookmarks.map((b, i) => (
          <Bookmark key={i} $w={b.w} $gap={b.gap}>
            {b.icon}
            {b.text && <Label $track={b.track}>{b.text}</Label>}
          </Bookmark>
        ))}
        <Grow />
        <Bookmark $w={34}><Stroke size={12} box="0 0 12 12" d="M1 1.500 5.500 6 1 10.500M6.500 1.500 11 6l-4.500 4.500" w={1.700} /></Bookmark>
        <Bookmark $w={21}><Divider /></Bookmark>
        <Bookmark $w={125} $gap={10}>
          <svg width="20" height="17" viewBox="0 0 20 17" fill="none" stroke="currentColor" strokeWidth="1.900"><path d="M1 14.500V2.500A1.500 1.500 0 0 1 2.500 1H7l2.500 2.500h8A1.500 1.500 0 0 1 19 5v9.500a1.500 1.500 0 0 1-1.500 1.500h-15A1.500 1.500 0 0 1 1 14.500Z" /></svg>
          <Label $track={-0.06}>All Bookmarks</Label>
        </Bookmark>
      </Bookmarks>

      <Page>
        <Sidebar>
          <Logo>
            <BrandMark size={70} />
            <LogoText><LogoInitial>U</LogoInitial>rbanExpress</LogoText>
          </Logo>
          <Nav>
            {navItems.map(({ Icon, text, color, track, active }) => (
              <NavItem key={text} $active={active} $color={color}>
                <Icon size={37.5} />
                <Label $track={track}>{text}</Label>
              </NavItem>
            ))}
          </Nav>
        </Sidebar>
        <Main>
          <Heading>Parcel Delivery Summary</Heading>
          <Cards>
            {cards.map(({ Icon, title, value, color, track }) => (
              <Card key={title} $icon={color}>
                <Icon />
                <CardTitle $track={track}>{title}</CardTitle>
                <CardValue>{value}</CardValue>
              </Card>
            ))}
          </Cards>
          <ChartTitle>Delivery Status</ChartTitle>
          <StatusPie />
          <Legend>
            {legend.map((l) => (
              <LegendItem key={l.name} $color={l.color} $track={l.track}>{l.name}</LegendItem>
            ))}
          </Legend>
        </Main>
        <Scrollbar>
          <svg width="13" height="10" viewBox="0 0 13 10" fill="currentColor"><path d="M5.500.8a1.200 1.200 0 0 1 2 0l5 7.700a1 1 0 0 1-.8 1.500H1.300a1 1 0 0 1-.8-1.500Z" /></svg>
          <Thumb />
          <svg width="13" height="10" viewBox="0 0 13 10" fill="currentColor"><path d="M5.500 9.200a1.200 1.200 0 0 0 2 0l5-7.700A1 1 0 0 0 11.700 0H1.300a1 1 0 0 0-.8 1.500Z" /></svg>
        </Scrollbar>
      </Page>

      <Taskbar>
        <Weather><Sun /></Weather>
        <Windows />
        <SearchBox>
          <Stroke size={19} d="M14.200 8.400a6.600 6.600 0 1 1-13.200 0 6.600 6.600 0 0 1 13.200 0ZM12.500 13l6 6" w={1.800} color="#e0e0e0" />
          Search
        </SearchBox>
        {apps.map((AppIcon, i) => (
          <AppButton key={i} $active={AppIcon === Chrome}><AppIcon /></AppButton>
        ))}
        <Grow />
        <Tray>
          <Stroke size={14} box="0 0 14 14" d="M1 10l6-6 6 6" w={1.700} color="#fff" />
          <svg width="26" height="14" viewBox="-3 0 26 14">
            <path d="M3 7a6 5 0 0 1 13-2l2 3-8 4H1Z" fill="#a9a0a0" />
            <path d="M0 9.500C0 7 3 5.500 5 6.500l12 6.500H4A3.800 3.800 0 0 1 0 9.500Z" fill="#dcd9d9" />
            <path d="M4 13.200 13 7c3-1.500 7 0 7 3.300 0 1.700-1.500 2.900-3 2.900Z" fill="#fff" />
          </svg>
          <TrayGroup>
            <svg width="20" height="16" viewBox="0 0 20 16" fill="none" stroke="#fff" strokeWidth="1.400">
              <path d="M.700 6a13 13 0 0 1 18.600 0M3.500 8.700a9.200 9.200 0 0 1 13 0M6.200 11.300a5.400 5.400 0 0 1 7.600 0" /><circle cx="10" cy="13.800" r="1.500" fill="#fff" stroke="none" />
            </svg>
            <svg width="20" height="16" viewBox="0 0 20 16" fill="none" stroke="#fff" strokeWidth="1.400">
              <path d="M1 5.500h3L8.300 1.500v13L4 10.500H1ZM10.800 5.500a4 4 0 0 1 0 5M13.300 3.200a7.500 7.500 0 0 1 0 9.600" /><path d="M15.800 1a11 11 0 0 1 0 14" stroke="#7c6d6e" />
            </svg>
            <svg width="21" height="16" viewBox="0 0 21 16">
              <path d="M5 3.200h10.500a2.300 2.300 0 0 1 2.300 2.300v6a2.300 2.300 0 0 1-2.300 2.300H3.700A2.300 2.300 0 0 1 1.400 11.500V9.500" fill="none" stroke="#fff" strokeWidth="1.400" />
              <path d="M7 5H15a1 1 0 0 1 1 1v5a1 1 0 0 1-1 1H4.500L7 8ZM18.500 6.500h1a1 1 0 0 1 1 1v2a1 1 0 0 1-1 1h-1Z" fill="#fff" />
              <path d="M4 0 1 6h2L1.500 10.500 6.500 4h-2L6 0Z" fill="#fff" />
            </svg>
          </TrayGroup>
          <Clockface>
            <Label $track={-0.2}>6:43 PM</Label>
            <Label $track={-0.1}>9/3/2025</Label>
          </Clockface>
        </Tray>
      </Taskbar>
    </Screen>
  );
}
